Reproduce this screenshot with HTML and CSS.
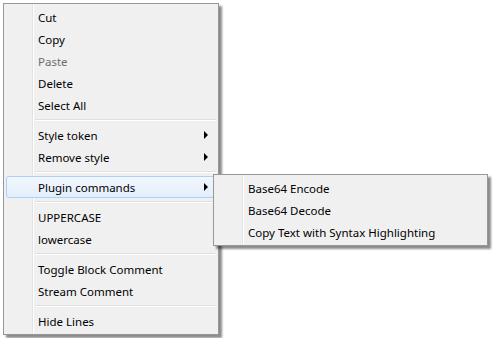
FILE: index.html
```html
<!DOCTYPE html>
<html lang="en">
  <head>
    <meta charset="UTF-8">
    <title>Context Menu</title>
    <link rel="stylesheet" href="styles.css">
  </head>
  <body>
    <!-- Main context menu -->
    <div class="menu main-menu">
      <div class="item">Cut</div>
      <div class="item">Copy</div>
      <div class="item disabled">Paste</div>
      <div class="item">Delete</div>
      <div class="item">Select All</div>
      <div class="sep"></div>
      <div class="item">Style token<span class="arrow"></span></div>
      <div class="item">Remove style<span class="arrow"></span></div>
      <div class="sep"></div>
      <div class="item active">Plugin commands<span class="arrow"></span></div>
      <div class="sep"></div>
      <div class="item">UPPERCASE</div>
      <div class="item">lowercase</div>
      <div class="sep"></div>
      <div class="item">Toggle Block Comment</div>
      <div class="item">Stream Comment</div>
      <div class="sep"></div>
      <div class="item">Hide Lines</div>
    </div>
    <!-- Plugin commands submenu -->
    <div class="menu sub-menu">
      <div class="item">Base64 Encode</div>
      <div class="item">Base64 Decode</div>
      <div class="item">Copy Text with Syntax Highlighting</div>
    </div>
  </body>
</html>
```

FILE: styles.css
```css
/* General Styles */
body {
  margin: 0;
  padding: 3px;
  background: #fff;
  font-family: "Noto Sans", "Open Sans", sans-serif;
  font-size: 11.5px;
  color: #000;
}

/* Menu box */
.menu {
  box-sizing: border-box;
  border: 1px solid #979797;
  padding: 2px;
  background-color: #f0f0f0;
  background-image: linear-gradient(to right, transparent 28px, #e2e3e3 28px, #e2e3e3 29px, #fff 29px, #fff 30px, transparent 30px);
  box-shadow: 3px 3px 2px rgba(0, 0, 0, 0.45);
}

.main-menu {
  width: 216px;
}

.sub-menu {
  position: absolute;
  left: 213px;
  top: 174px;
  width: 275px;
}

/* Items */
.item {
  display: flex;
  align-items: center;
  box-sizing: border-box;
  height: 22px;
  padding-left: 31px;
  border: 1px solid transparent;
  border-radius: 3px;
  white-space: nowrap;
}

.item.disabled {
  color: #6d6d6d;
}

.item.active {
  border-color: #aecff7;
  background: linear-gradient(to bottom, #f2f7fd, #e4eefb);
}

.arrow {
  margin-left: auto;
  margin-right: 7px;
  width: 0;
  height: 0;
  border-left: 4px solid #000;
  border-top: 4px solid transparent;
  border-bottom: 4px solid transparent;
}

/* Separators */
.sep {
  height: 8px;
  margin-left: 29px;
  background: linear-gradient(to bottom, transparent 3px, #e0e0e0 3px, #e0e0e0 4px, #fff 4px, #fff 5px, transparent 5px);
}
```
